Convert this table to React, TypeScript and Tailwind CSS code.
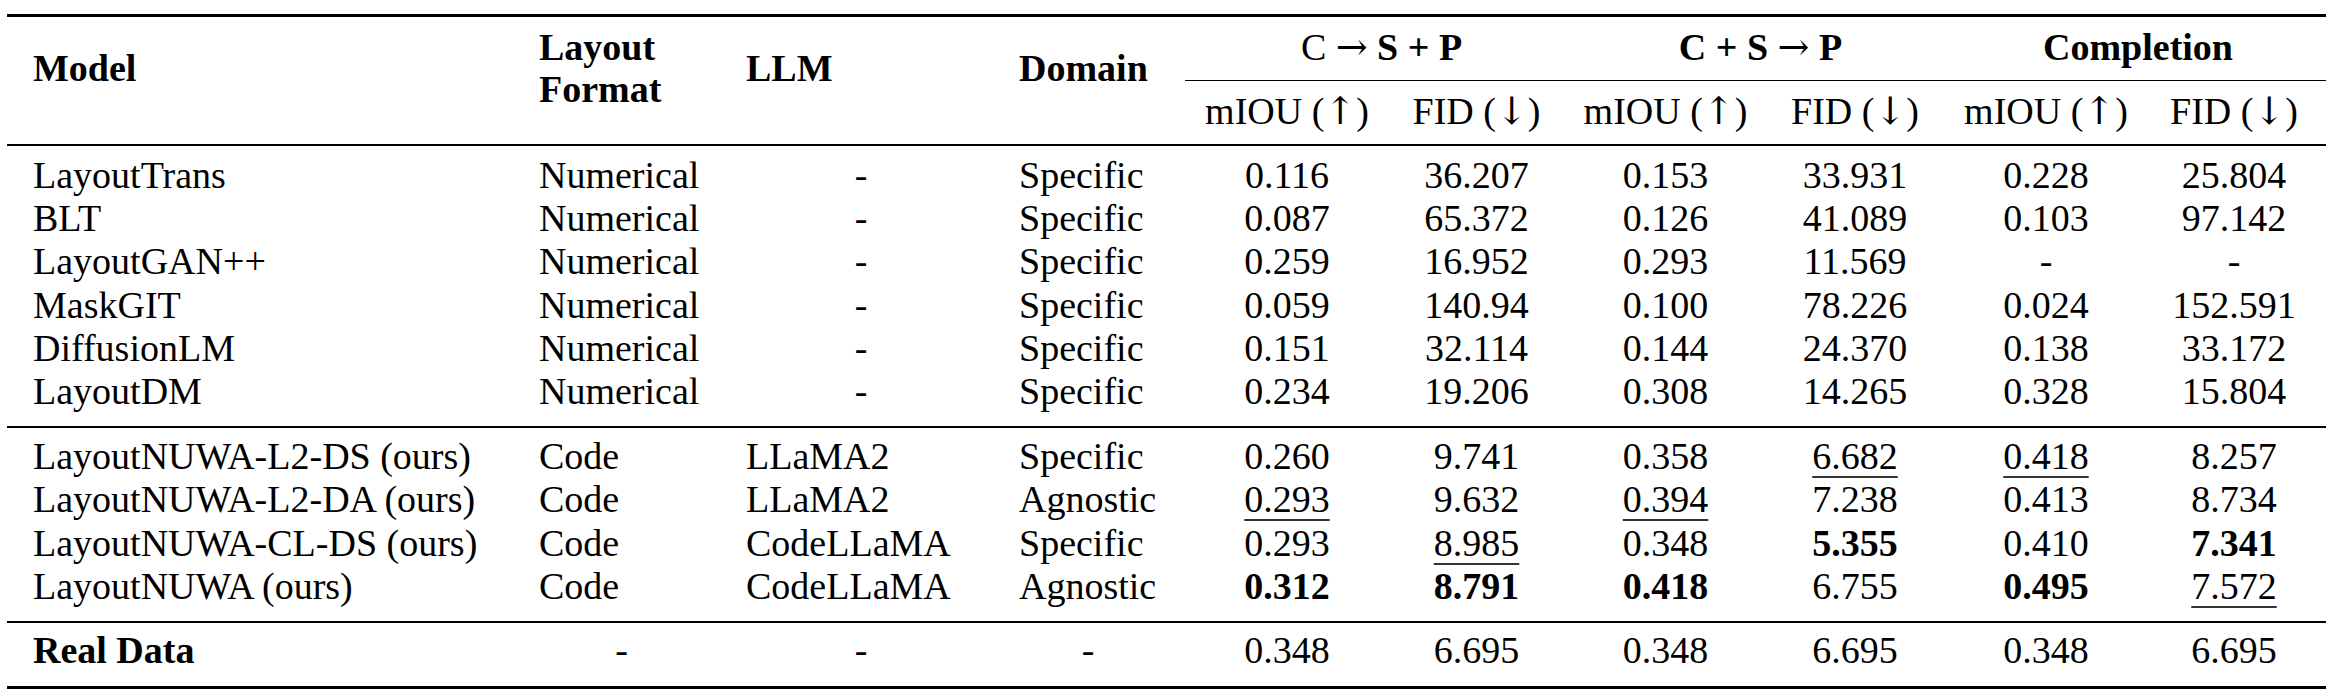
import React from 'react';

const GRID = 'grid grid-cols-[512px_205px_274px_194px_190px_189px_189px_190px_192px_184px]';
const TEXT_PAD = ['pl-[26px]', 'pl-[20px]', 'pl-[22px]', 'pl-[21px]'];
const DASH_BOX = ['w-[160px]', 'w-[165px]', 'w-[230px]', 'w-[138px]'];

const baseRows = [
  ['LayoutTrans', 'Numerical', '-', 'Specific', '0.116', '36.207', '0.153', '33.931', '0.228', '25.804'],
  ['BLT', 'Numerical', '-', 'Specific', '0.087', '65.372', '0.126', '41.089', '0.103', '97.142'],
  ['LayoutGAN++', 'Numerical', '-', 'Specific', '0.259', '16.952', '0.293', '11.569', '-', '-'],
  ['MaskGIT', 'Numerical', '-', 'Specific', '0.059', '140.94', '0.100', '78.226', '0.024', '152.591'],
  ['DiffusionLM', 'Numerical', '-', 'Specific', '0.151', '32.114', '0.144', '24.370', '0.138', '33.172'],
  ['LayoutDM', 'Numerical', '-', 'Specific', '0.234', '19.206', '0.308', '14.265', '0.328', '15.804'],
];

// "*" = best (bold), "_" = second best (underlined)
const oursRows = [
  ['LayoutNUWA-L2-DS (ours)', 'Code', 'LLaMA2', 'Specific', '0.260', '9.741', '0.358', '_6.682', '_0.418', '8.257'],
  ['LayoutNUWA-L2-DA (ours)', 'Code', 'LLaMA2', 'Agnostic', '_0.293', '9.632', '_0.394', '7.238', '0.413', '8.734'],
  ['LayoutNUWA-CL-DS (ours)', 'Code', 'CodeLLaMA', 'Specific', '0.293', '_8.985', '0.348', '*5.355', '0.410', '*7.341'],
  ['LayoutNUWA (ours)', 'Code', 'CodeLLaMA', 'Agnostic', '*0.312', '*8.791', '*0.418', '6.755', '*0.495', '_7.572'],
];

const realRow = ['*Real Data', '-', '-', '-', '0.348', '6.695', '0.348', '6.695', '0.348', '6.695'];

const Arrow: React.FC<{ c: string }> = ({ c }) => (
  <span className="font-['DejaVu_Serif',serif] font-normal">{c}</span>
);

const Val: React.FC<{ v: string }> = ({ v }) => {
  if (v.startsWith('*')) return <span className="font-bold">{v.slice(1)}</span>;
  if (v.startsWith('_'))
    return (
      <span className="underline decoration-[1.5px] decoration-[#333] underline-offset-[7px]">{v.slice(1)}</span>
    );
  return <span>{v}</span>;
};

const Row: React.FC<{ cells: string[] }> = ({ cells }) => (
  <div className={GRID}>
    {cells.map((c, i) => {
      if (i < 4) {
        if (c === '-') {
          return (
            <div key={i} className={TEXT_PAD[i]}>
              <div className={`${DASH_BOX[i]} text-center`}>-</div>
            </div>
          );
        }
        return (
          <div key={i} className={`${TEXT_PAD[i]} whitespace-nowrap`}>
            <Val v={c} />
          </div>
        );
      }
      return (
        <div key={i} className="text-center whitespace-nowrap">
          <Val v={c} />
        </div>
      );
    })}
  </div>
);

const subHeads: [string, string][] = [
  ['mIOU', '↑'],
  ['FID', '↓'],
  ['mIOU', '↑'],
  ['FID', '↓'],
  ['mIOU', '↑'],
  ['FID', '↓'],
];

export default function App() {
  return (
    <div className="w-[2332px] h-[700px] bg-white pt-[14px] pl-[7px] text-black font-['Liberation_Serif',serif] text-[38px] leading-[43.3px]">
      <div className="w-[2319px]">
        {/* top rule */}
        <div className="h-[3px] bg-black" />

        {/* header */}
        <div className={GRID}>
          <div className="row-span-3 pl-[26px] pt-[30px] font-bold">Model</div>
          <div className="row-span-3 pl-[20px] pt-[8.5px] font-bold leading-[42px]">
            <div>Layout</div>
            <div>Format</div>
          </div>
          <div className="row-span-3 pl-[22px] pt-[30px] font-bold">LLM</div>
          <div className="row-span-3 pl-[21px] pt-[30px] font-bold">Domain</div>

          <div className="col-span-2 text-center pt-[8.5px] whitespace-nowrap">
            C <Arrow c="→" /> <span className="font-bold">S + P</span>
          </div>
          <div className="col-span-2 text-center pt-[8.5px] whitespace-nowrap">
            <span className="font-bold">C + S</span> <Arrow c="→" /> <span className="font-bold">P</span>
          </div>
          <div className="col-span-2 text-center pt-[8.5px] font-bold">Completion</div>

          <div className="col-span-6 -ml-[7px] mt-[11px] h-[1.5px] bg-black" />

          {subHeads.map(([name, arrow], i) => (
            <div key={i} className="text-center pt-[9px] pb-[10.7px] whitespace-nowrap">
              {name} (<Arrow c={arrow} />)
            </div>
          ))}
        </div>

        {/* header rule */}
        <div className="h-[2.2px] bg-black" />

        <div className="pt-[7.3px] pb-[12.3px]">
          {baseRows.map((r, i) => (
            <Row key={i} cells={r} />
          ))}
        </div>

        <div className="h-[2px] bg-black" />

        <div className="pt-[7.3px] pb-[12.5px]">
          {oursRows.map((r, i) => (
            <Row key={i} cells={r} />
          ))}
        </div>

        <div className="h-[2px] bg-black" />

        <div className="pt-[6.5px] pb-[13px]">
          <Row cells={realRow} />
        </div>

        {/* bottom rule */}
        <div className="h-[3px] bg-black" />
      </div>
    </div>
  );
}
